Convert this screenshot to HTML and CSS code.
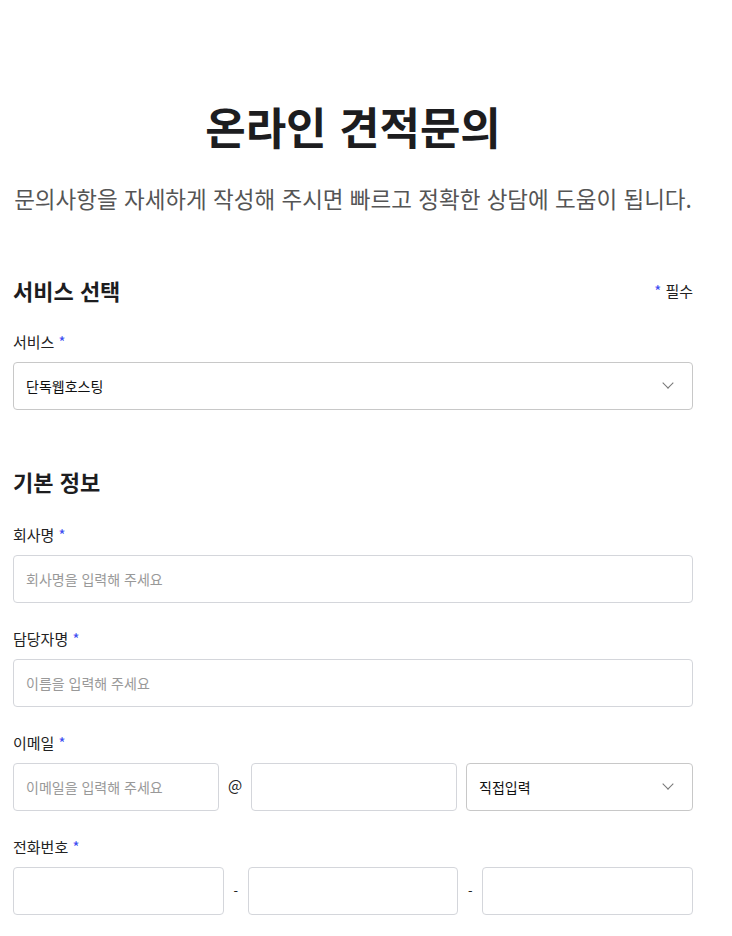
FILE: index.html
```html
<!DOCTYPE html>
<html lang="ko">

<head>
    <meta charset="UTF-8">
    <meta name="viewport" content="width=device-width, initial-scale=1.0">
    <title>온라인 견적문의</title>
    <link rel="stylesheet" href="styles.css">
</head>

<body>
    <div class="container">
        <h1 class="page-title">온라인 견적문의</h1>
        <p class="page-desc">문의사항을 자세하게 작성해 주시면 빠르고 정확한 상담에 도움이 됩니다.</p>

        <form id="estimateForm">
            <div class="section-head">
                <h3>서비스 선택</h3>
                <span class="required-note"><em>*</em> 필수</span>
            </div>

            <div class="field">
                <label for="service">서비스 <em>*</em></label>
                <div class="select-wrap">
                    <select id="service" name="service">
                        <option>단독웹호스팅</option>
                    </select>
                </div>
            </div>

            <div class="section-head section-gap">
                <h3>기본 정보</h3>
            </div>

            <div class="field">
                <label for="company">회사명 <em>*</em></label>
                <input type="text" id="company" name="company" placeholder="회사명을 입력해 주세요">
            </div>

            <div class="field">
                <label for="manager">담당자명 <em>*</em></label>
                <input type="text" id="manager" name="manager" placeholder="이름을 입력해 주세요">
            </div>

            <div class="field">
                <label for="emailId">이메일 <em>*</em></label>
                <div class="email-row">
                    <input type="text" id="emailId" name="emailId" placeholder="이메일을 입력해 주세요">
                    <span class="at">@</span>
                    <input type="text" id="emailDomain" name="emailDomain">
                    <div class="select-wrap">
                        <select id="domainSelect" name="domainSelect">
                            <option>직접입력</option>
                        </select>
                    </div>
                </div>
            </div>

            <div class="field">
                <label for="phone1">전화번호 <em>*</em></label>
                <div class="phone-row">
                    <input type="text" id="phone1" name="phone1">
                    <span class="dash">-</span>
                    <input type="text" id="phone2" name="phone2">
                    <span class="dash">-</span>
                    <input type="text" id="phone3" name="phone3">
                </div>
            </div>
        </form>
    </div>
</body>

</html>
```

FILE: styles.css
```css
body {
    font-family: "Noto Sans CJK KR", "Noto Sans", sans-serif;
    margin: 0;
    color: #222;
    background-color: #fff;
}

.container {
    width: 680px;
    padding: 94px 0 40px 13px;
}

.page-title {
    margin: 0;
    font-size: 44px;
    font-weight: 700;
    line-height: 64px;
    text-align: center;
    color: #1d1d1f;
}

.page-desc {
    margin: 25px 0 0;
    font-size: 22.5px;
    line-height: 30px;
    text-align: center;
    color: #555;
}

.section-head {
    display: flex;
    justify-content: space-between;
    align-items: center;
    margin-top: 62px;
}

.section-head h3 {
    margin: 0;
    font-size: 22px;
    font-weight: 700;
    line-height: 30px;
    color: #1d1d1f;
}

.section-gap {
    margin-top: 56px;
}

.required-note {
    font-size: 15px;
}

em {
    font-style: normal;
    color: #3d4cf2;
}

.field {
    margin-top: 25px;
}

.section-head + .field {
    margin-top: 26px;
}

.section-gap + .field {
    margin-top: 28px;
}

.field label {
    display: block;
    margin-bottom: 9px;
    font-size: 15px;
    line-height: 22px;
}

input[type="text"],
select {
    display: block;
    width: 100%;
    height: 48px;
    box-sizing: border-box;
    padding: 0 12px;
    border: 1px solid #d4d6db;
    border-radius: 4px;
    font-family: inherit;
    font-size: 14px;
    color: #111;
    background-color: #fff;
}

input::placeholder {
    color: #999;
}

select {
    appearance: none;
    border-color: #c8c8c8;
}

.select-wrap {
    position: relative;
}

.select-wrap::after {
    content: "";
    position: absolute;
    right: 21px;
    top: 17px;
    width: 7px;
    height: 7px;
    border-right: 1px solid #777;
    border-bottom: 1px solid #777;
    transform: rotate(45deg);
    pointer-events: none;
}

.email-row {
    display: grid;
    grid-template-columns: 206px 32px 206px 1fr;
}

.email-row .select-wrap {
    margin-left: 9px;
}

.at {
    font-size: 15px;
    line-height: 44px;
    text-align: center;
}

.phone-row {
    display: grid;
    grid-template-columns: 1fr 24px 1fr 24px 1fr;
}

.dash {
    font-size: 13px;
    line-height: 48px;
    text-align: center;
}
```
